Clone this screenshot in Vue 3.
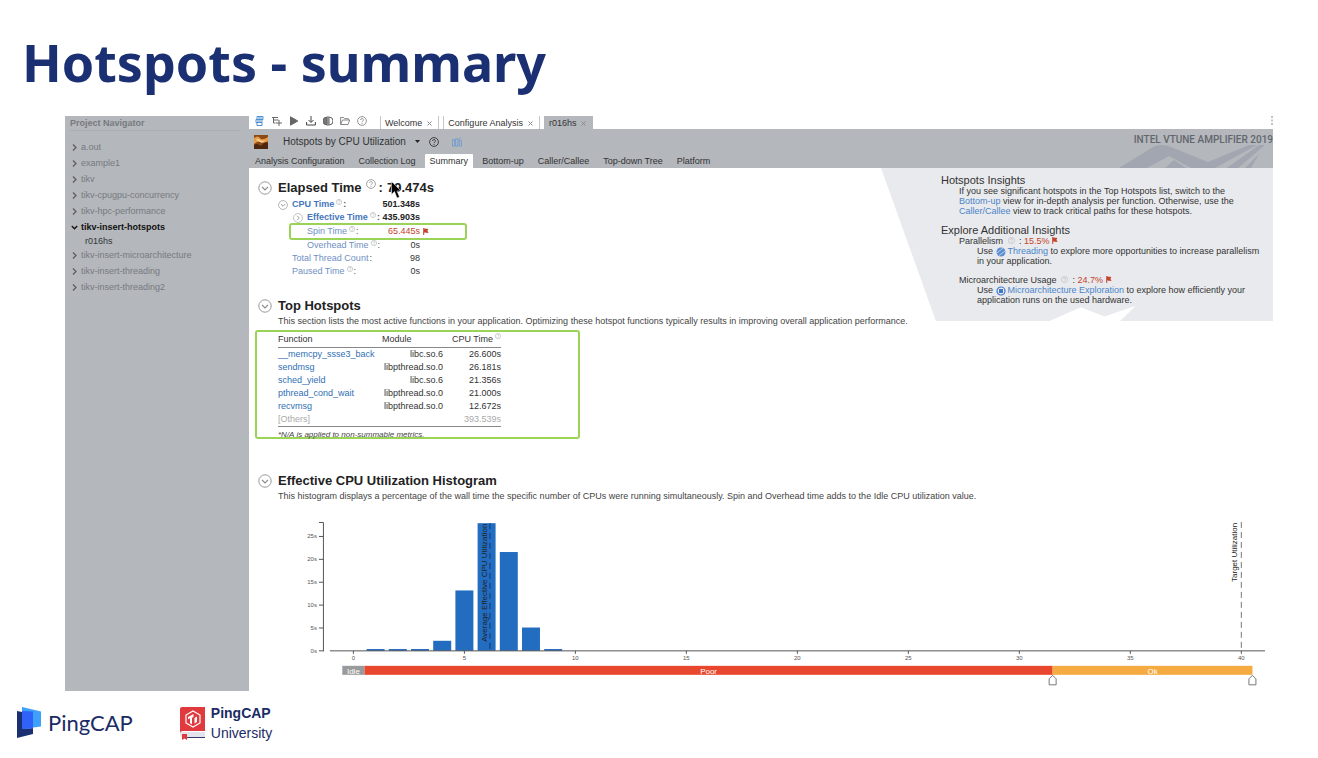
<script setup>
const projects = [
  { name: 'a.out' },
  { name: 'example1' },
  { name: 'tikv' },
  { name: 'tikv-cpugpu-concurrency' },
  { name: 'tikv-hpc-performance' },
  { name: 'tikv-insert-hotspots', open: true, results: ['r016hs'] },
  { name: 'tikv-insert-microarchitecture' },
  { name: 'tikv-insert-threading' },
  { name: 'tikv-insert-threading2' },
]

const docs = [
  { name: 'Welcome' },
  { name: 'Configure Analysis' },
  { name: 'r016hs', active: true },
]

const views = ['Analysis Configuration', 'Collection Log', 'Summary', 'Bottom-up', 'Caller/Callee', 'Top-down Tree', 'Platform']
const activeView = 'Summary'

const metrics = [
  { label: 'CPU Time', value: '501.348s', level: 1, strong: true, toggle: 'open', help: true },
  { label: 'Effective Time', value: '435.903s', level: 2, strong: true, toggle: 'closed', help: true },
  { label: 'Spin Time', value: '65.445s', level: 2, flagged: true, help: true },
  { label: 'Overhead Time', value: '0s', level: 2, help: true },
  { label: 'Total Thread Count', value: '98', level: 1 },
  { label: 'Paused Time', value: '0s', level: 1, help: true },
]

const hotspots = [
  ['__memcpy_ssse3_back', 'libc.so.6', '26.600s'],
  ['sendmsg', 'libpthread.so.0', '26.181s'],
  ['sched_yield', 'libc.so.6', '21.356s'],
  ['pthread_cond_wait', 'libpthread.so.0', '21.000s'],
  ['recvmsg', 'libpthread.so.0', '12.672s'],
]

// Histogram scales, in chart units
const base = 149
const xOf = (cpus) => 104.5 + cpus * 22.22
const yOf = (sec) => base - sec * 4.58
const bars = [
  [1, 0.4], [2, 0.4], [3, 0.4], [4, 2.2], [5, 13.2], [6, 27.9], [7, 21.6], [8, 5.1], [9, 0.4],
]
const xTicks = [0, 5, 10, 15, 20, 25, 30, 35, 40]
const yTicks = [0, 5, 10, 15, 20, 25]
const bands = [
  { name: 'Idle', from: -0.5, to: 0.5, fill: '#999a9b' },
  { name: 'Poor', from: 0.5, to: 31.5, fill: '#e8472d' },
  { name: 'Ok', from: 31.5, to: 40.5, fill: '#f5ab41' },
]
</script>

<template>
  <div class="slide">
    <svg class="defs" aria-hidden="true">
      <symbol id="help" viewBox="0 0 10 10">
        <circle cx="5" cy="5" r="4.4" fill="none" stroke="currentColor" stroke-width=".9" />
        <path d="M3.6 4a1.4 1.4 0 1 1 2 1.2q-.6.3-.6 1M5 7v.9" fill="none" stroke="currentColor" stroke-width=".9" />
      </symbol>
      <symbol id="down" viewBox="0 0 14 14">
        <circle cx="7" cy="7" r="6.2" fill="none" stroke="#999" stroke-width="1" />
        <path d="M4 5.8l3 3 3-3" fill="none" stroke="#888" stroke-width="1.2" />
      </symbol>
      <symbol id="right" viewBox="0 0 14 14">
        <circle cx="7" cy="7" r="6.2" fill="none" stroke="#aaa" stroke-width="1" />
        <path d="M5.8 4l3 3-3 3" fill="none" stroke="#999" stroke-width="1.3" />
      </symbol>
      <symbol id="flag" viewBox="0 0 6 7">
        <path d="M.2 0h1v.6L5.400 1 4.400 2.800 5.600 5 1.200 4.400V7h-1z" fill="#c4432b" />
      </symbol>
    </svg>

    <h1 class="title">Hotspots - summary</h1>

    <div class="app">
      <nav class="navigator">
        <h2>Project Navigator</h2>
        <ul>
          <li v-for="p in projects" :key="p.name">
            <button type="button" :class="{ open: p.open }">
              <svg viewBox="0 0 7 7"><path :d="p.open ? 'M.8 2l2.7 2.8L6.2 2' : 'M2 .5l3 3-3 3'" /></svg>{{ p.name }}
            </button>
            <a v-for="r in p.results" :key="r" href="#">{{ r }}</a>
          </li>
        </ul>
      </nav>

      <main>
        <div class="toolbar">
          <div class="tools">
            <button type="button" aria-label="Project"><svg viewBox="0 0 10 10" class="blue"><path d="M2 .5h6v3H2zM1 3.5h6v3H1zM2 6.500h5v3H2zM3 2h4M2 5h4" /></svg></button>
            <button type="button" aria-label="New analysis"><svg viewBox="0 0 10 10"><path d="M0 1.500h6M1.500 4h5M1.500 1.500v5.500h2M7 4v6M4 7h6" /></svg></button>
            <button type="button" aria-label="Start"><svg viewBox="0 0 10 10"><path d="M1.500 .8L8.800 5 1.500 9.200z" fill="#666" /></svg></button>
            <button type="button" aria-label="Import"><svg viewBox="0 0 10 10" class="dark"><path d="M5 0v6M2.500 4L5 6.500 7.500 4M.6 6v3h8.800V6" /></svg></button>
            <button type="button" aria-label="Compare"><svg viewBox="0 0 10 10"><path d="M4 1a4 4 0 0 0 0 8z" fill="#777" /><path d="M6 1a4 4 0 0 1 0 8zM5 0v10" /></svg></button>
            <button type="button" aria-label="Open"><svg viewBox="0 0 10 10" class="light"><path d="M.6 8.500V1.500h3l1 1.200h3.800V4M.6 8.500L2.500 4h7.200L8 8.500z" /></svg></button>
            <button type="button" aria-label="Help"><svg class="light"><use href="#help" /></svg></button>
          </div>
          <div v-for="d in docs" :key="d.name" class="doc" :class="{ active: d.active }">
            <button type="button">{{ d.name }}</button>
            <button type="button" :aria-label="'Close ' + d.name">
              <svg class="close" viewBox="0 0 5 5"><path d="M.5 .5l4 4M4.500 .5l-4 4" /></svg>
            </button>
          </div>
          <svg class="dots" viewBox="0 0 2 9"><path d="M1 0v2M1 3.500v2M1 7v2" stroke="#888" stroke-width="1" /></svg>
        </div>

        <header class="banner">
          <svg class="art" viewBox="0 0 154 23" aria-hidden="true">
            <path d="M0 23L34 2Q42-2 52 2L89 17 130 0h8L96 23H72L50 11 28 23z" fill="#a2a6b0" />
            <path d="M46 23l9-8 12 8zM108 23l32-23h6l-27 23zM126 23l14-14-8 14z" fill="#a2a6b0" />
          </svg>
          <strong class="brand">INTEL VTUNE AMPLIFIER 2019</strong>
          <div class="viewpoint">
            <svg class="flame" viewBox="0 0 14 14">
              <rect width="14" height="14" fill="#8a4a16" />
              <path d="M0 3q4-3 6 0t8-1v4q-3 3-6 1T0 9z" fill="#e79a45" />
              <path d="M2 5q2-2 4 0t5 0q-2 4-5 2t-4-2z" fill="#ffd79a" />
              <path d="M0 14v-4q3-2 5 0t4-1 5-1v6z" fill="#4d260d" />
            </svg>
            <select aria-label="Viewpoint"><option>Hotspots by CPU Utilization</option></select>
            <svg class="caret" viewBox="0 0 5 3"><path d="M0 0h5L2.500 3z" /></svg>
            <button type="button" aria-label="About this viewpoint"><svg><use href="#help" /></svg></button>
            <button type="button" class="customize" aria-label="Customize"><svg viewBox="0 0 11 10"><path d="M.5 2.500h2.500v7H.5zM4 1.500h2.500v8H4zM8 3.500h2.500v6H8zM7 3l2.500-3" /></svg></button>
          </div>
          <div class="views">
            <button v-for="v in views" :key="v" type="button" :class="{ active: v === activeView }">{{ v }}</button>
          </div>
        </header>

        <div class="overview">
          <div class="left">
            <section>
              <h2>
                <svg class="toggle"><use href="#down" /></svg>Elapsed Time
                <svg class="help"><use href="#help" /></svg><span class="colon">:</span>
                <span class="elapsed">79.474s<svg class="cursor" viewBox="0 0 12 18"><path d="M.5 .5v13l3-3 2.500 6.500 2.500-1-2.500-6h4z" fill="#000" stroke="#fff" stroke-width=".5" /></svg></span>
              </h2>
              <dl class="metrics">
                <div v-for="m in metrics" :key="m.label" :class="['level' + m.level, { strong: m.strong, flagged: m.flagged }]">
                  <dt>
                    <svg v-if="m.toggle" class="toggle"><use :href="m.toggle === 'open' ? '#down' : '#right'" /></svg>{{ m.label }}<svg v-if="m.help" class="help"><use href="#help" /></svg><span>:</span>
                  </dt>
                  <dd>{{ m.value }}<svg v-if="m.flagged" class="flag"><use href="#flag" /></svg></dd>
                </div>
              </dl>
            </section>

            <section class="top">
              <h2><svg class="toggle"><use href="#down" /></svg>Top Hotspots</h2>
              <p>This section lists the most active functions in your application. Optimizing these hotspot functions typically results in improving overall application performance.</p>
              <div class="callout">
                <table>
                  <thead>
                    <tr><th>Function</th><th>Module</th><th>CPU Time<svg class="help"><use href="#help" /></svg></th></tr>
                  </thead>
                  <tbody>
                    <tr v-for="h in hotspots" :key="h[0]">
                      <td><a href="#">{{ h[0] }}</a></td><td>{{ h[1] }}</td><td>{{ h[2] }}</td>
                    </tr>
                    <tr class="others"><td>[Others]</td><td></td><td>393.539s</td></tr>
                  </tbody>
                </table>
                <small>*N/A is applied to non-summable metrics.</small>
              </div>
            </section>
          </div>

          <aside>
            <h3>Hotspots Insights</h3>
            <p>
              If you see significant hotspots in the Top Hotspots list, switch to the<br>
              <a href="#">Bottom-up</a> view for in-depth analysis per function. Otherwise, use the<br>
              <a href="#">Caller/Callee</a> view to track critical paths for these hotspots.
            </p>
            <h3>Explore Additional Insights</h3>
            <p>Parallelism <svg class="help"><use href="#help" /></svg> : <em>15.5% <svg class="flag"><use href="#flag" /></svg></em></p>
            <p class="advice">
              Use <svg class="kind" viewBox="0 0 10 10"><circle cx="5" cy="5" r="4.500" fill="#5b8ed0" /><path d="M1 6l6-5M3 8.500l6-4.500" stroke="#bcd2ee" /></svg>
              <a href="#">Threading</a> to explore more opportunities to increase parallelism<br>in your application.
            </p>
            <p>Microarchitecture Usage <svg class="help"><use href="#help" /></svg> : <em>24.7% <svg class="flag"><use href="#flag" /></svg></em></p>
            <p class="advice">
              Use <svg class="kind" viewBox="0 0 10 10"><circle cx="5" cy="5" r="4" fill="none" stroke="#3f78c8" stroke-width="1.200" /><rect x="3" y="3" width="4" height="4" fill="#3f78c8" /></svg>
              <a href="#">Microarchitecture Exploration</a> to explore how efficiently your<br>application runs on the used hardware.
            </p>
          </aside>
        </div>

        <section class="histogram">
          <h2><svg class="toggle"><use href="#down" /></svg>Effective CPU Utilization Histogram</h2>
          <p>This histogram displays a percentage of the wall time the specific number of CPUs were running simultaneously. Spin and Overhead time adds to the Idle CPU utilization value.</p>
          <svg class="chart" viewBox="0 0 1025 189" role="img" aria-label="Effective CPU utilization histogram">
            <rect v-for="b in bars" :key="b[0]" :x="xOf(b[0]) - 9" :y="yOf(b[1])" width="18" :height="base - yOf(b[1])" fill="#236dc1" />
            <g class="axis">
              <path d="M70 20.500h4.500v129" />
              <path v-for="t in yTicks" :key="t" :d="`M70 ${yOf(t)}h4.500`" />
              <path d="M81 149h936" />
              <path v-for="t in xTicks" :key="t" :d="`M${xOf(t)} 149v3`" />
            </g>
            <g class="ticks">
              <text v-for="t in yTicks" :key="t" x="68" :y="yOf(t) + 2" text-anchor="end">{{ t }}s</text>
              <text v-for="t in xTicks" :key="t" :x="xOf(t)" y="158" text-anchor="middle">{{ t }}</text>
            </g>
            <path :d="`M${xOf(6.150)} 21V149`" stroke="#0d3a78" stroke-dasharray="6 4" />
            <path :d="`M${xOf(40)} 20V149`" stroke="#777" stroke-dasharray="6 4" />
            <g class="marks">
              <text transform="translate(238 140) rotate(-90)">Average Effective CPU Utilization</text>
              <text transform="translate(989 80) rotate(-90)">Target Utilization</text>
            </g>
            <g v-for="b in bands" :key="b.name" class="band">
              <rect :x="xOf(b.from)" y="164" :width="xOf(b.to) - xOf(b.from)" height="9" :fill="b.fill" />
              <text :x="xOf((b.from + b.to) / 2)" y="172" text-anchor="middle">{{ b.name }}</text>
            </g>
            <path v-for="n in [31.5, 40.5]" :key="n" :d="`M${xOf(n) - 3.500} 183v-6l3.500-3.500 3.500 3.500v6z`" fill="#fff" stroke="#777" />
          </svg>
        </section>
      </main>
    </div>

    <footer>
      <div class="pingcap">
        <svg viewBox="0 0 24 32">
          <path d="M5 0l19 4.500v15L5 22z" fill="#3ea0f8" />
          <path d="M0 4l5 1v17l11-1v6L0 31z" fill="#1b2f73" />
          <path d="M5 4l11 .5v17L5 22z" fill="#2f62f6" />
        </svg>
        <span>PingCAP</span>
      </div>
      <div class="university">
        <svg viewBox="0 0 26 34">
          <path d="M3 1h23v24H4q-3 0-3 3V3q0-2 2-2z" fill="#e0393e" />
          <path d="M4 26h22v5H4q-3 0-3-2.500T4 26z" fill="#e3e3ec" />
          <path d="M8 31.500h18" stroke="#333a70" />
          <path d="M3 28h5v6l-2.500-1.500L3 34z" fill="#e0393e" />
          <path d="M14 5l7 4v8l-7 4-7-4V9z" fill="none" stroke="#fff" stroke-width="1.200" />
          <path d="M9 11l5.500-3v3l-1.500.8v6.500l-2-1v-5l-2 1zM15.500 12l2.500-1.500v5.500l-2.500 1.500z" fill="#fff" />
        </svg>
        <span><b>PingCAP</b>University</span>
      </div>
    </footer>
  </div>
</template>

<style>
body { background: #fff; }
</style>

<style scoped>
.slide { min-height: 100vh; background: #fff; font: 9px/13px "Liberation Sans", Arial, sans-serif; color: #333; }
.slide * { box-sizing: border-box; }
.slide svg { flex: none; }
.defs { position: absolute; width: 0; height: 0; }
h1, h2, h3, p, ul, dl, dd { margin: 0; padding: 0; }
ul { list-style: none; }
button, select { font: inherit; color: inherit; background: none; border: 0; padding: 0; margin: 0; appearance: none; white-space: nowrap; }
button svg { display: block; }
a { color: #4a84c9; text-decoration: none; }

.title { padding: 26px 22px 18px; font: 700 52px/72px "Noto Sans", "Open Sans", sans-serif; color: #1b2f73; white-space: nowrap; }

.app { display: grid; grid-template-columns: 184px 1fr; margin: 0 45px 0 65px; }
.navigator { background: #b4b7bc; color: #777a80; }
.navigator h2 { margin: 0 8px 8px 5px; font: 700 9px/14px "Liberation Sans", Arial, sans-serif; border-bottom: 1px solid #a9aeb5; }
.navigator button { display: flex; align-items: center; gap: 3px; height: 16px; padding-left: 6px; }
.navigator button svg { width: 7px; height: 7px; fill: none; stroke: #5c5f65; stroke-width: 1.3; }
.navigator button.open { color: #111; font-weight: 700; }
.navigator button.open svg { stroke: #111; }
.navigator a { display: block; padding-left: 20px; line-height: 12px; color: #33363b; }

main { min-width: 0; }
.toolbar { display: flex; align-items: stretch; height: 13px; }
.tools { display: flex; gap: 7px; align-items: center; padding: 0 13px 3px 6px; }
.tools svg { width: 10px; height: 10px; fill: none; stroke: #666; color: #888; }
.tools svg.blue { stroke: #4d8fd0; }
.tools svg.dark { stroke: #444; }
.tools svg.light { stroke: #888; }
.doc { display: flex; align-items: center; gap: 5px; margin-right: 4px; padding: 1px 6px 0 4px; border-left: 1px solid #c4c6c9; border-right: 1px solid #c4c6c9; }
.doc.active { background: #b4b7bc; border-color: #b4b7bc; }
.close { width: 5px; height: 5px; fill: none; stroke: #888; }
.dots { width: 2px; height: 9px; margin-left: auto; }

.banner { position: relative; background: #b4b7bc; }
.art { position: absolute; right: 0; bottom: 0; width: 154px; height: 23px; }
.brand { position: absolute; top: 2px; right: 0; font: 500 10px/17px Roboto, sans-serif; color: #63666c; white-space: nowrap; }
.viewpoint { position: relative; display: flex; align-items: center; height: 25px; padding-left: 5px; font-size: 10px; }
.flame { width: 14px; height: 14px; margin-right: 15px; }
.caret { width: 5px; height: 3px; margin: 0 9px 0 9px; fill: #222; }
.viewpoint button svg { width: 10px; height: 10px; }
.customize { margin-left: 13px; }
.customize svg { fill: none; stroke: #6f9bd0; }
.views { position: relative; display: flex; height: 14px; gap: 4px; padding-left: 1px; }
.views button { padding: 0 5px; border-radius: 1px 1px 0 0; }
.views button.active { background: #fff; }

.overview { display: flex; align-items: flex-start; }
.left { flex: 1; min-width: 0; padding-top: 10px; }
section { padding-left: 29px; }
section h2 { display: flex; align-items: center; margin-left: -20px; font-size: 13px; line-height: 19px; color: #222; white-space: nowrap; }
h2 .toggle { width: 14px; height: 14px; margin-right: 6px; }
h2 .help { width: 10px; height: 10px; margin: 0 3px 8px 4px; color: #999; }
.elapsed { position: relative; margin-left: 4px; }
.cursor { position: absolute; left: 4px; top: 3px; width: 12px; height: 18px; }

.metrics { width: 142px; padding-top: 1px; color: #333; }
.metrics > div { position: relative; display: flex; justify-content: space-between; white-space: nowrap; }
.metrics dt { position: relative; display: flex; align-items: center; color: #6f8fc4; }
.metrics dt span { margin-left: 1px; color: #555; }
.metrics .level1 { padding-left: 14px; }
.metrics .level2 { padding-left: 29px; }
.metrics .strong { font-weight: 700; color: #222; }
.metrics .strong dt { color: #4576bd; }
.metrics .toggle { width: 10px; height: 10px; margin: 0 4px 0 -14px; }
.metrics .help { width: 6px; height: 6px; margin: 0 0 6px 2px; color: #aaa; }
.metrics .flagged { margin: 1px 0; color: #c4432b; }
.metrics .flagged::before { content: ""; position: absolute; inset: -2px -47px -2px 11px; border: 2px solid #9bd356; border-radius: 3px; }
.metrics dd { position: relative; }
.metrics dd .flag { position: absolute; left: 100%; top: 3px; margin-left: 3px; }
.flag { width: 6px; height: 7px; }

.top { margin-top: 18px; }
section p { line-height: 12px; color: #444; white-space: nowrap; }
.callout { width: 325px; margin: 3px 0 0 -23px; padding-left: 21px; border: 2px solid #9bd356; border-radius: 3px; }
table { width: 223px; table-layout: fixed; border-collapse: collapse; }
th { padding: 0; font-weight: 400; line-height: 15px; text-align: left; border-bottom: 1px solid #888; white-space: nowrap; }
th:first-child { width: 104px; }
th:nth-child(2) { width: 61px; }
th:last-child { text-align: right; }
th .help { width: 6px; height: 6px; margin: 0 0 3px 2px; color: #aaa; }
td { padding: 0; line-height: 13px; text-align: right; }
td:first-child { text-align: left; }
td a { color: #2f6fb5; }
.others td { color: #aaa; border-bottom: 1px solid #888; }
small { display: block; margin: 4px 0 -2px; font-size: 8px; line-height: 8px; font-style: italic; color: #444; }

aside { width: 392px; padding: 7px 0 7px 60px; background: #e9eaed; line-height: 10px; white-space: nowrap; clip-path: polygon(0 0, 100% 0, 100% 100%, 61% 100%, 65% 90%, 57% 97%, 51% 91%, 43% 100%, 14% 100%); }
aside h3 { font-size: 11px; font-weight: 400; line-height: 11px; }
aside p { margin: 0 0 9px 18px; }
aside p:has(+ .advice) { margin-bottom: 0; }
aside .advice { margin-left: 36px; }
aside em { font-style: normal; color: #c4432b; }
aside .help { width: 7px; height: 7px; margin: 0 2px; color: #bbb; }
aside .kind { width: 10px; height: 10px; margin: -2px 2px -2px 0; vertical-align: -1px; }

.histogram { margin-top: 32px; padding-left: 0; }
.histogram h2 { margin-left: 9px; }
.histogram p { padding-left: 29px; }
.chart { display: block; width: 100%; height: auto; }
.axis { fill: none; stroke: #555; stroke-width: 1; }
.ticks { font-size: 6px; fill: #555; }
.marks { font-size: 8px; fill: #222; }
.band text { font-size: 8px; fill: #fff; }

footer { display: flex; align-items: center; gap: 46px; padding: 12px 17px; color: #1b2b66; }
footer > div { display: flex; align-items: center; }
.pingcap { gap: 7px; font: 400 22px/32px Lato, sans-serif; }
.pingcap svg { width: 24px; height: 32px; }
.university { gap: 6px; font-size: 14px; line-height: 20px; }
.university svg { width: 26px; height: 34px; }
.university b { display: block; }
</style>
